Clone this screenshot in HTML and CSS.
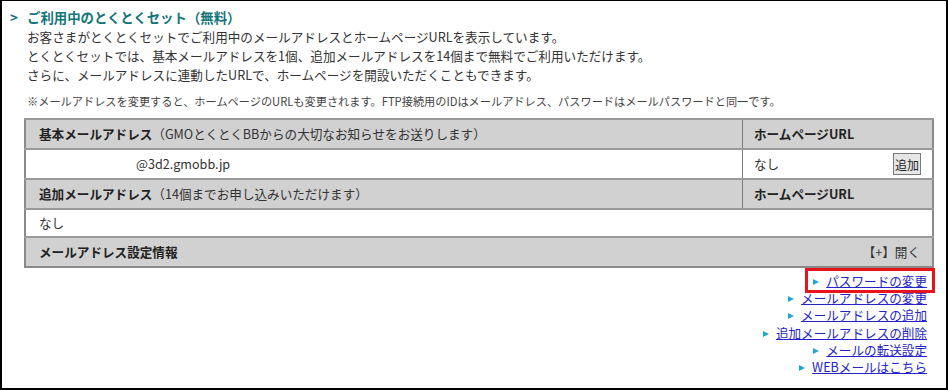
FILE: index.html
```html
<!DOCTYPE html>
<html lang="ja">
<head>
    <meta charset="UTF-8">
    <title>ご利用中のとくとくセット</title>
    <link rel="stylesheet" href="styles.css">
</head>
<body>
    <div class="frame">
        <h2 class="section-title"><span class="chevron">&gt;</span>ご利用中のとくとくセット（無料）</h2>
        <div class="intro">
            <p>お客さまがとくとくセットでご利用中のメールアドレスとホームページURLを表示しています。</p>
            <p>とくとくセットでは、基本メールアドレスを1個、追加メールアドレスを14個まで無料でご利用いただけます。</p>
            <p>さらに、メールアドレスに連動したURLで、ホームページを開設いただくこともできます。</p>
        </div>
        <p class="note">※メールアドレスを変更すると、ホームページのURLも変更されます。FTP接続用のIDはメールアドレス、パスワードはメールパスワードと同一です。</p>

        <table class="mail-table">
            <tr class="head">
                <th class="col-mail"><b>基本メールアドレス</b>（GMOとくとくBBからの大切なお知らせをお送りします）</th>
                <th class="col-url"><b>ホームページURL</b></th>
            </tr>
            <tr class="row-basic">
                <td class="col-mail"><span class="address">@3d2.gmobb.jp</span></td>
                <td class="col-url">
                    <div class="url-cell">
                        <span>なし</span>
                        <button class="add-button">追加</button>
                    </div>
                </td>
            </tr>
            <tr class="head">
                <th class="col-mail"><b>追加メールアドレス</b>（14個までお申し込みいただけます）</th>
                <th class="col-url"><b>ホームページURL</b></th>
            </tr>
            <tr class="row-extra">
                <td colspan="2">なし</td>
            </tr>
            <tr class="head">
                <th colspan="2">
                    <div class="settings-cell">
                        <b>メールアドレス設定情報</b>
                        <span>【+】開く</span>
                    </div>
                </th>
            </tr>
        </table>

        <ul class="links">
            <li><span class="marked"><span class="bullet"></span><a href="#">パスワードの変更</a></span></li>
            <li><span class="bullet"></span><a href="#">メールアドレスの変更</a></li>
            <li><span class="bullet"></span><a href="#">メールアドレスの追加</a></li>
            <li><span class="bullet"></span><a href="#">追加メールアドレスの削除</a></li>
            <li><span class="bullet"></span><a href="#">メールの転送設定</a></li>
            <li><span class="bullet"></span><a href="#">WEBメールはこちら</a></li>
        </ul>
    </div>
</body>
</html>
```

FILE: styles.css
```css
html, body {
    margin: 0;
    padding: 0;
    background: #fff;
}
body {
    font-family: "Noto Sans CJK JP", "Noto Sans", sans-serif;
    font-size: 12.6px;
    color: #333;
}
.frame {
    width: 948px;
    height: 390px;
    box-sizing: border-box;
    border: 2px solid #000;
    border-top-width: 1px;
    padding-top: 7px;
    overflow: hidden;
}
.section-title {
    margin: 0;
    padding-left: 8px;
    font-size: 13.4px;
    line-height: 19px;
    font-weight: bold;
    color: #137579;
}
.chevron {
    display: inline-block;
    width: 17px;
}
.intro {
    padding-left: 25px;
}
.intro p {
    margin: 0;
    line-height: 19px;
}
.note {
    margin: 9px 0 0 25px;
    font-size: 11.2px;
    line-height: 17px;
    color: #444;
}
.mail-table {
    margin: 8px 0 0 22px;
    width: 910px;
    border-collapse: collapse;
    border: 2px solid #8a8a8a;
}
.mail-table th,
.mail-table td {
    text-align: left;
    font-weight: normal;
    padding: 0 12px 0 13px;
    border-top: 2px solid #9a9a9a;
    line-height: 18px;
}
.mail-table .head th {
    background-color: #d1d1d1;
    height: 28px;
}
.mail-table b {
    font-weight: bold;
    color: #222;
}
.mail-table .col-url {
    width: 167px;
    border-left: 1px solid #7d7d7d;
    padding-left: 11px;
    padding-right: 11px;
}
.row-basic td {
    height: 28px;
}
.row-extra td {
    height: 26px;
}
.address {
    margin-left: 97px;
}
.url-cell,
.settings-cell {
    display: flex;
    justify-content: space-between;
    align-items: center;
}
.settings-cell span {
    margin-right: 0;
}
.add-button {
    font-family: inherit;
    font-size: 12px;
    width: 28px;
    height: 22px;
    padding: 0;
    background: #e6e6e6;
    border: 1px solid #7a7a7a;
    color: #222;
}
.links {
    list-style: none;
    margin: 4px 0 0;
    padding: 0 19px 0 0;
    text-align: right;
}
.links li {
    line-height: 17.2px;
}
.links a {
    color: #2424c8;
    text-decoration: underline;
}
.bullet {
    display: inline-block;
    width: 0;
    height: 0;
    border-left: 6px solid #22a6cf;
    border-top: 3.5px solid transparent;
    border-bottom: 3.5px solid transparent;
    margin-right: 7px;
    vertical-align: 1px;
}
.marked {
    position: relative;
    display: inline-block;
}
.marked::after {
    content: "";
    position: absolute;
    top: -4px;
    bottom: -4px;
    left: -8px;
    right: -8px;
    border: 3px solid #e8141c;
}
```
